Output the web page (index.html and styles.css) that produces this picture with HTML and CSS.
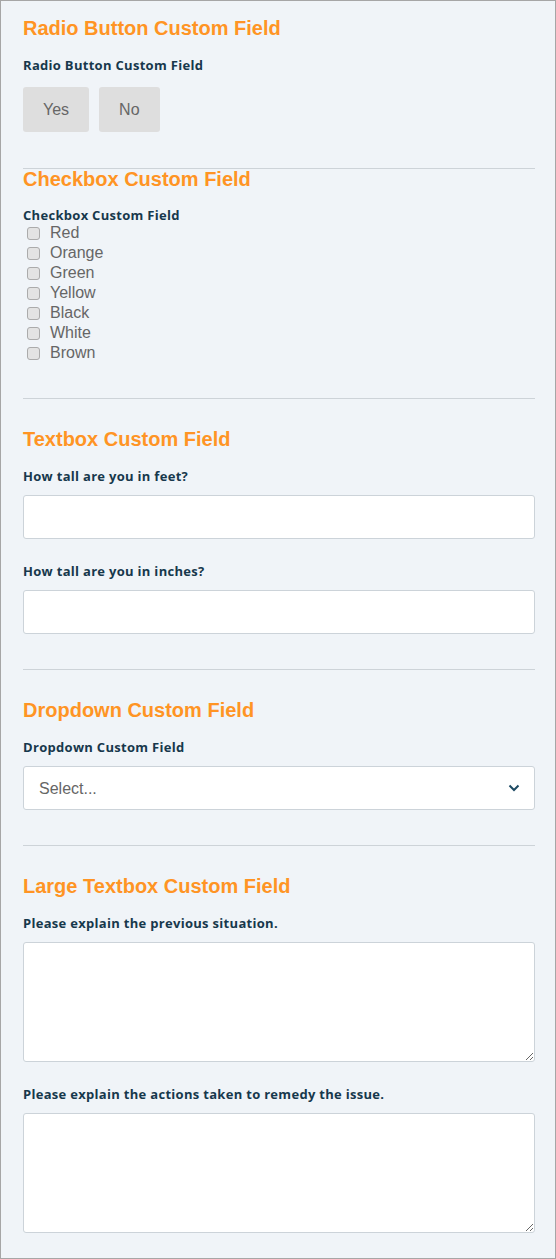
FILE: index.html
```html
<!DOCTYPE html>
<html lang="en">
<head>
    <meta charset="UTF-8">
    <meta name="viewport" content="width=device-width, initial-scale=1.0">
    <link rel="stylesheet" href="styles.css">
    <title>Custom Fields</title>
</head>
<body>
    <div id="container">
        <section class="field-group">
            <h2>Radio Button Custom Field</h2>
            <label class="field-label">Radio Button Custom Field</label>
            <div class="choice-buttons">
                <button class="choice-btn">Yes</button>
                <button class="choice-btn">No</button>
            </div>
        </section>

        <hr>

        <section class="field-group tight">
            <h2>Checkbox Custom Field</h2>
            <label class="field-label">Checkbox Custom Field</label>
            <ul class="check-list">
                <li><label><input type="checkbox"> Red</label></li>
                <li><label><input type="checkbox"> Orange</label></li>
                <li><label><input type="checkbox"> Green</label></li>
                <li><label><input type="checkbox"> Yellow</label></li>
                <li><label><input type="checkbox"> Black</label></li>
                <li><label><input type="checkbox"> White</label></li>
                <li><label><input type="checkbox"> Brown</label></li>
            </ul>
        </section>

        <hr>

        <section class="field-group">
            <h2>Textbox Custom Field</h2>
            <label class="field-label" for="feet">How tall are you in feet?</label>
            <input type="text" id="feet" class="text-input">
            <label class="field-label" for="inches">How tall are you in inches?</label>
            <input type="text" id="inches" class="text-input">
        </section>

        <hr>

        <section class="field-group">
            <h2>Dropdown Custom Field</h2>
            <label class="field-label" for="dropdown">Dropdown Custom Field</label>
            <div class="select-wrapper">
                <select id="dropdown">
                    <option>Select...</option>
                </select>
                <svg class="chevron" width="12" height="8" viewBox="0 0 12 8">
                    <path d="M1.5 1.5 L6 6 L10.5 1.5" fill="none" stroke="#1d4a63" stroke-width="2"/>
                </svg>
            </div>
        </section>

        <hr>

        <section class="field-group">
            <h2>Large Textbox Custom Field</h2>
            <label class="field-label" for="previous">Please explain the previous situation.</label>
            <textarea id="previous"></textarea>
            <label class="field-label" for="actions">Please explain the actions taken to remedy the issue.</label>
            <textarea id="actions"></textarea>
        </section>
    </div>
</body>
</html>
```

FILE: styles.css
```css
body {
    margin: 0;
    background-color: #f0f4f8;
}

#container {
    box-sizing: border-box;
    min-height: 100vh;
    border: 1px solid #a6a6a6;
    padding: 17px 20px 25px 22px;
    background-color: #f0f4f8;
}

h2 {
    font-family: "Liberation Sans", Arial, sans-serif;
    font-size: 20px;
    line-height: 20px;
    font-weight: bold;
    color: #ff9424;
    margin: 0 0 19px 0;
}

.field-group {
    padding-top: 30px;
}

.field-group:first-child {
    padding-top: 0;
    padding-bottom: 1px;
}

.field-group.tight {
    padding-top: 0;
}

.tight h2 {
    margin-bottom: 18px;
}

hr {
    border: none;
    border-top: 1px solid #cdd3d8;
    margin: 35px 0 0 0;
}

.field-label {
    display: block;
    font-family: "Open Sans", sans-serif;
    font-size: 13px;
    line-height: 16px;
    font-weight: bold;
    letter-spacing: 0.3px;
    color: #17384c;
    margin-bottom: 11px;
}

.tight .field-label {
    margin-bottom: 0;
}

.choice-buttons {
    display: flex;
    gap: 10px;
    margin-top: 14px;
}

.choice-btn {
    font-family: "Liberation Sans", Arial, sans-serif;
    font-size: 16px;
    color: #666;
    background-color: #dedede;
    border: none;
    border-radius: 3px;
    height: 45px;
    padding: 0 20px;
    cursor: pointer;
}

.choice-btn:hover {
    background-color: #d2d2d2;
}

.check-list {
    list-style: none;
    margin: 0;
    padding: 0;
}

.check-list li {
    font-family: "Liberation Sans", Arial, sans-serif;
    font-size: 16px;
    line-height: 20px;
    color: #666;
}

.check-list label {
    display: flex;
    align-items: center;
    gap: 10px;
}

.check-list input {
    appearance: none;
    width: 13px;
    height: 13px;
    margin: 0 0 0 4px;
    background-color: #e3e3e3;
    border: 1px solid #ababab;
    border-radius: 3px;
    box-sizing: border-box;
}

.check-list input:checked {
    background-color: #9a9a9a;
}

.text-input,
select,
textarea {
    display: block;
    width: 100%;
    box-sizing: border-box;
    border: 1px solid #ccd3d9;
    border-radius: 3px;
    background-color: #ffffff;
    font-family: "Liberation Sans", Arial, sans-serif;
    font-size: 16px;
    color: #666;
    outline: none;
}

.text-input {
    height: 44px;
    padding: 0 15px;
    margin-bottom: 24px;
}

.text-input:last-child {
    margin-bottom: 0;
}

.select-wrapper {
    position: relative;
}

select {
    appearance: none;
    height: 44px;
    padding: 0 15px;
}

.chevron {
    position: absolute;
    right: 15px;
    top: 18px;
    pointer-events: none;
}

textarea {
    height: 120px;
    padding: 10px 15px;
    margin: 0 0 24px 0;
}

textarea:last-child {
    margin-bottom: 0;
}
```
